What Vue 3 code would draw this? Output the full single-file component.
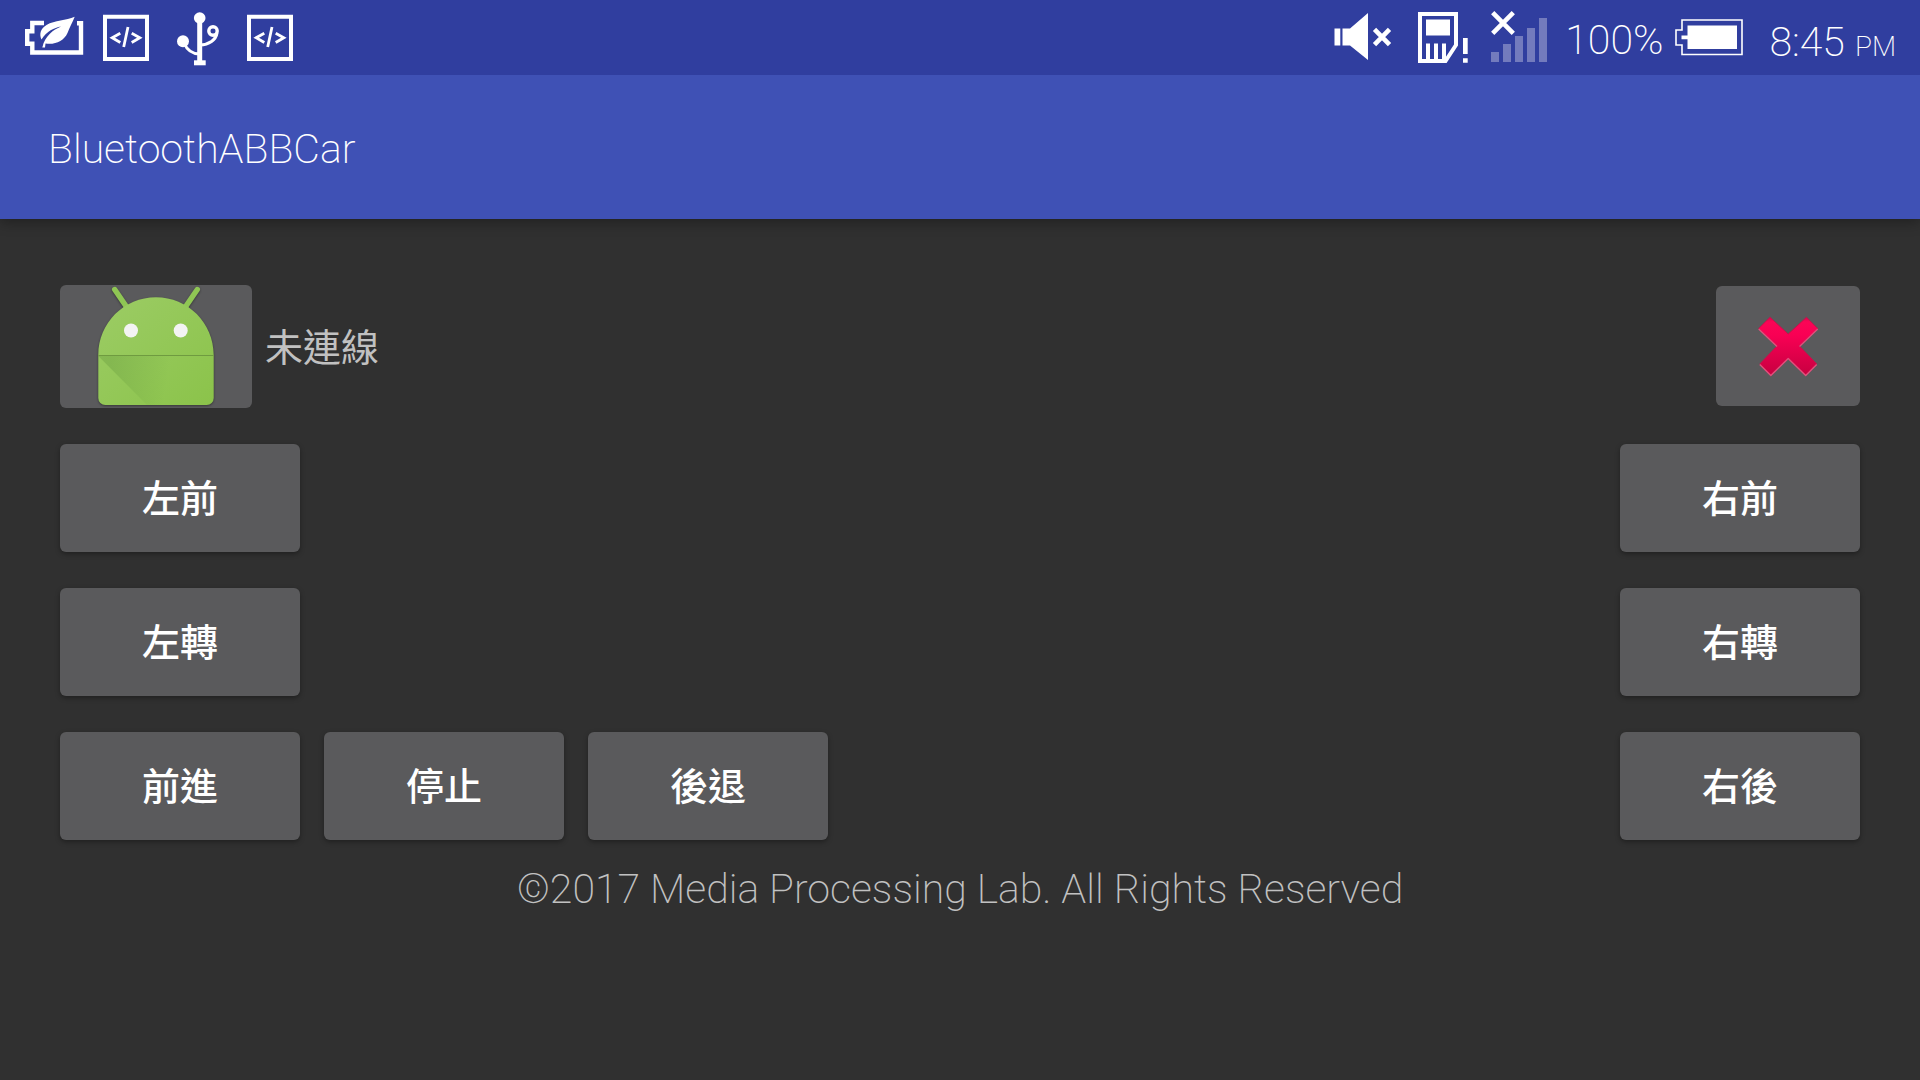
<script setup>
const rows = [
  { left: ['左前'], right: '右前' },
  { left: ['左轉'], right: '右轉' },
  { left: ['前進', '停止', '後退'], right: '右後' },
]
</script>

<template>
  <div class="screen">
    <header>
      <div class="status-bar">
        <div class="notifications">
          <svg width="60" height="75" viewBox="24 0 60 75" aria-hidden="true">
            <path d="M44 23H32.3V31.3H27.2V43.7H32.3V52.5H81V23.3H77" fill="none" stroke="#fff" stroke-width="4.4" />
            <path d="M74.7 16.8C66 21 55 20 46.500 25C40.500 28.500 39 34 41.500 39.500C47 31 54 28 61 26.600C53 30 45 36 42.300 47.500H45L45.500 43.500C55 45 64 41 67.500 33C70 27 72.500 22 74.700 16.800Z" fill="#fff" />
          </svg>
          <svg width="46" height="75" viewBox="103 0 46 75" aria-hidden="true">
            <path d="M105 16.700H147V59H105Z" fill="none" stroke="#fff" stroke-width="4" />
            <path d="M120.300 33.200L112.200 37.700L120.300 42.500M131.700 33.200L139.800 37.700L131.700 42.500M128 27L123.700 47" fill="none" stroke="#fff" stroke-width="2.800" />
          </svg>
          <svg width="60" height="75" viewBox="168 0 60 75" aria-hidden="true">
            <circle cx="199.700" cy="18" r="5.800" fill="#fff" />
            <circle cx="183" cy="41.300" r="6" fill="#fff" />
            <circle cx="213" cy="31" r="4.200" fill="none" stroke="#fff" stroke-width="3.400" />
            <path d="M199.700 18V62" fill="none" stroke="#fff" stroke-width="5" />
            <path d="M184 43C187 50 192 54 199.700 54M217 33C216 40 209 44.500 200 45" fill="none" stroke="#fff" stroke-width="3" />
            <path d="M194 60.300H205.700V65.300H194Z" fill="#fff" />
          </svg>
          <svg width="46" height="75" viewBox="103 0 46 75" aria-hidden="true">
            <path d="M105 16.700H147V59H105Z" fill="none" stroke="#fff" stroke-width="4" />
            <path d="M120.300 33.200L112.200 37.700L120.300 42.500M131.700 33.200L139.800 37.700L131.700 42.500M128 27L123.700 47" fill="none" stroke="#fff" stroke-width="2.800" />
          </svg>
        </div>
        <div class="system">
          <svg class="mute" width="58" height="75" viewBox="1333 0 58 75" aria-hidden="true">
            <path d="M1333.500 28.500H1339.300V45.500H1333.500ZM1341.500 28.500H1349L1367 13V60L1349 45.500H1341.500Z" fill="#fff" />
            <path d="M1373.500 29.300L1388.500 44.700M1388.500 29.300L1373.500 44.700" stroke="#fff" stroke-width="4.600" />
          </svg>
          <svg class="sim" width="50" height="75" viewBox="1417 0 50 75" aria-hidden="true">
            <path d="M1419 14H1455V45L1444.500 61H1419Z" fill="none" stroke="#fff" stroke-width="4" />
            <path d="M1425 19.500H1449V35.500H1425ZM1425 43.500H1429V60H1425ZM1433 43.500H1437V60H1433ZM1441 43.500H1445V60H1441ZM1462 38H1466.700V54H1462ZM1462 58.300H1466.700V62.700H1462Z" fill="#fff" />
          </svg>
          <svg class="signal" width="56" height="75" viewBox="1490 0 56 75" aria-hidden="true">
            <path d="M1490 52H1498V62H1490ZM1502 44H1510V62H1502ZM1514 36H1522V62H1514ZM1526 28H1534V62H1526ZM1538 18H1546V62H1538Z" fill="#737bbd" />
            <path d="M1491.700 12.700L1512.300 33.300M1512.300 12.700L1491.700 33.300" stroke="#fff" stroke-width="4.600" />
          </svg>
          <span class="percent">100%</span>
          <svg class="battery" width="68" height="75" viewBox="1674 0 68 75" aria-hidden="true">
            <path d="M1681 20H1741V54.500H1681V45H1675V30H1681Z" fill="none" stroke="#fff" stroke-width="1.600" />
            <path d="M1686.500 25.500H1736V49H1686.500V39.300H1680.500V35.500H1686.500Z" fill="#fff" />
          </svg>
          <span class="time">8:45<small>PM</small></span>
        </div>
      </div>
      <div class="app-bar"><h1>BluetoothABBCar</h1></div>
    </header>

    <main>
      <div class="row connection">
        <button type="button" class="device" aria-label="Android">
          <svg width="192" height="123" viewBox="0 0 192 123" aria-hidden="true">
            <defs>
              <linearGradient id="skin" x1="0" y1="0" x2="1" y2="1">
                <stop offset="0" stop-color="#9ccc65" />
                <stop offset="1" stop-color="#8bc34a" />
              </linearGradient>
              <linearGradient id="fold" gradientUnits="userSpaceOnUse" x1="50" y1="82" x2="108" y2="92">
                <stop offset="0" stop-color="#33691e" stop-opacity="0.180" />
                <stop offset="1" stop-color="#33691e" stop-opacity="0" />
              </linearGradient>
            </defs>
            <g class="robot">
              <path d="M54.700 4.500L68 24M137.300 4.500L124 24" stroke="#8fc654" stroke-width="5.400" stroke-linecap="round" />
              <path d="M38.300 70C38.300 38 64 12.300 96 12.300S153.700 38 153.700 70V113A7 7 0 0 1 146.700 120H45.300A7 7 0 0 1 38.300 113Z" fill="url(#skin)" />
            </g>
            <path d="M38.300 71L87 120H146.700A7 7 0 0 0 153.700 113V71Z" fill="url(#fold)" />
            <path d="M38.300 70.500H153.700" stroke="#6f9b40" stroke-width="1" />
            <circle cx="71" cy="45.500" r="7" fill="#f3f3f3" />
            <circle cx="120.700" cy="45.500" r="7" fill="#f3f3f3" />
          </svg>
        </button>
        <span class="state">未連線</span>
        <button type="button" class="close" aria-label="✕">
          <svg width="144" height="120" viewBox="0 0 144 120" aria-hidden="true">
            <defs>
              <linearGradient id="cross" x1="0" y1="0" x2="0" y2="1">
                <stop offset="0" stop-color="#d9054d" />
                <stop offset="0.080" stop-color="#fb0556" />
                <stop offset="0.300" stop-color="#f90054" />
                <stop offset="1" stop-color="#c70040" />
              </linearGradient>
            </defs>
            <path d="M54 31.300L72.200 48L90.500 31.300L101.700 42.500L83.500 60L100.700 78L89.700 89.500L72.200 72.500L54.800 89.500L43.800 78L61 60L42.700 42.500Z" fill="url(#cross)" stroke="#c4124b" stroke-width="1" stroke-linejoin="round" />
            <path d="M42.700 43L61 60.500M101.700 43L83.500 60.500M43.800 78.500L54.800 89.500L72.200 72.500L89.700 89.500L100.700 78.500" fill="none" stroke="#e0507c" stroke-width="1.400" stroke-linejoin="round" />
          </svg>
        </button>
      </div>

      <div v-for="row in rows" :key="row.right" class="row">
        <button v-for="label in row.left" :key="label" type="button" class="key">{{ label }}</button>
        <button type="button" class="key last">{{ row.right }}</button>
      </div>
    </main>

    <footer>©2017 Media Processing Lab. All Rights Reserved</footer>
  </div>
</template>

<style>
body {
  margin: 0;
  background: #303030;
}
</style>

<style scoped>
.screen {
  min-height: 100vh;
  background: #303030;
  color: #fff;
  font-family: Roboto, "Noto Sans CJK TC", sans-serif;
  font-weight: 200;
  font-size: 41px;
}

header {
  box-shadow: 0 4px 12px rgba(0, 0, 0, 0.3);
}

.status-bar {
  display: flex;
  justify-content: space-between;
  height: 75px;
  padding: 0 24px;
  background: #303e9f;
}

.notifications,
.system {
  display: flex;
  align-items: center;
}

.notifications {
  gap: 19px;
}

svg {
  display: block;
  flex: none;
}

.sim {
  margin-left: 26px;
}

.signal {
  margin-left: 23px;
}

.percent {
  margin-left: 18px;
}

.battery {
  margin-left: 12px;
}

.time {
  display: flex;
  align-items: baseline;
  margin-left: 26px;
}

.percent,
.time {
  padding-top: 6px;
  line-height: 75px;
  white-space: nowrap;
}

.time {
  padding-top: 10px;
}

.time small {
  margin-left: 10px;
  font-size: 28px;
  line-height: 1;
}

.app-bar {
  display: flex;
  align-items: center;
  height: 144px;
  padding: 0 48px;
  background: #3f51b5;
}

h1 {
  margin: 0;
  padding-top: 4px;
  font-size: 41px;
  font-weight: 200;
}

main {
  display: flex;
  flex-direction: column;
  gap: 36px;
  padding: 66px 60px 0;
}

.row {
  display: flex;
  align-items: center;
  gap: 24px;
}

.connection {
  gap: 13px;
}

button {
  padding: 0;
  border: 0;
  border-radius: 6px;
  background: #5a5a5c;
  color: #fff;
  font-family: "Noto Sans CJK TC", sans-serif;
  font-size: 38px;
  font-weight: 500;
}

.key {
  width: 240px;
  height: 108px;
  padding-bottom: 6px;
  box-shadow: 0 2px 5px rgba(0, 0, 0, 0.35);
}

.last,
.close {
  margin-left: auto;
}

.close {
  margin-bottom: 1px;
}

.robot {
  filter: drop-shadow(0 1px 1px rgba(0, 0, 0, 0.4));
}

.state {
  padding-bottom: 4px;
  color: #c1c1c1;
  font-family: "Noto Sans CJK TC", sans-serif;
  font-size: 38px;
  font-weight: 400;
}

footer {
  margin-top: 24px;
  color: #c1c1c1;
  line-height: 50px;
  text-align: center;
}
</style>
